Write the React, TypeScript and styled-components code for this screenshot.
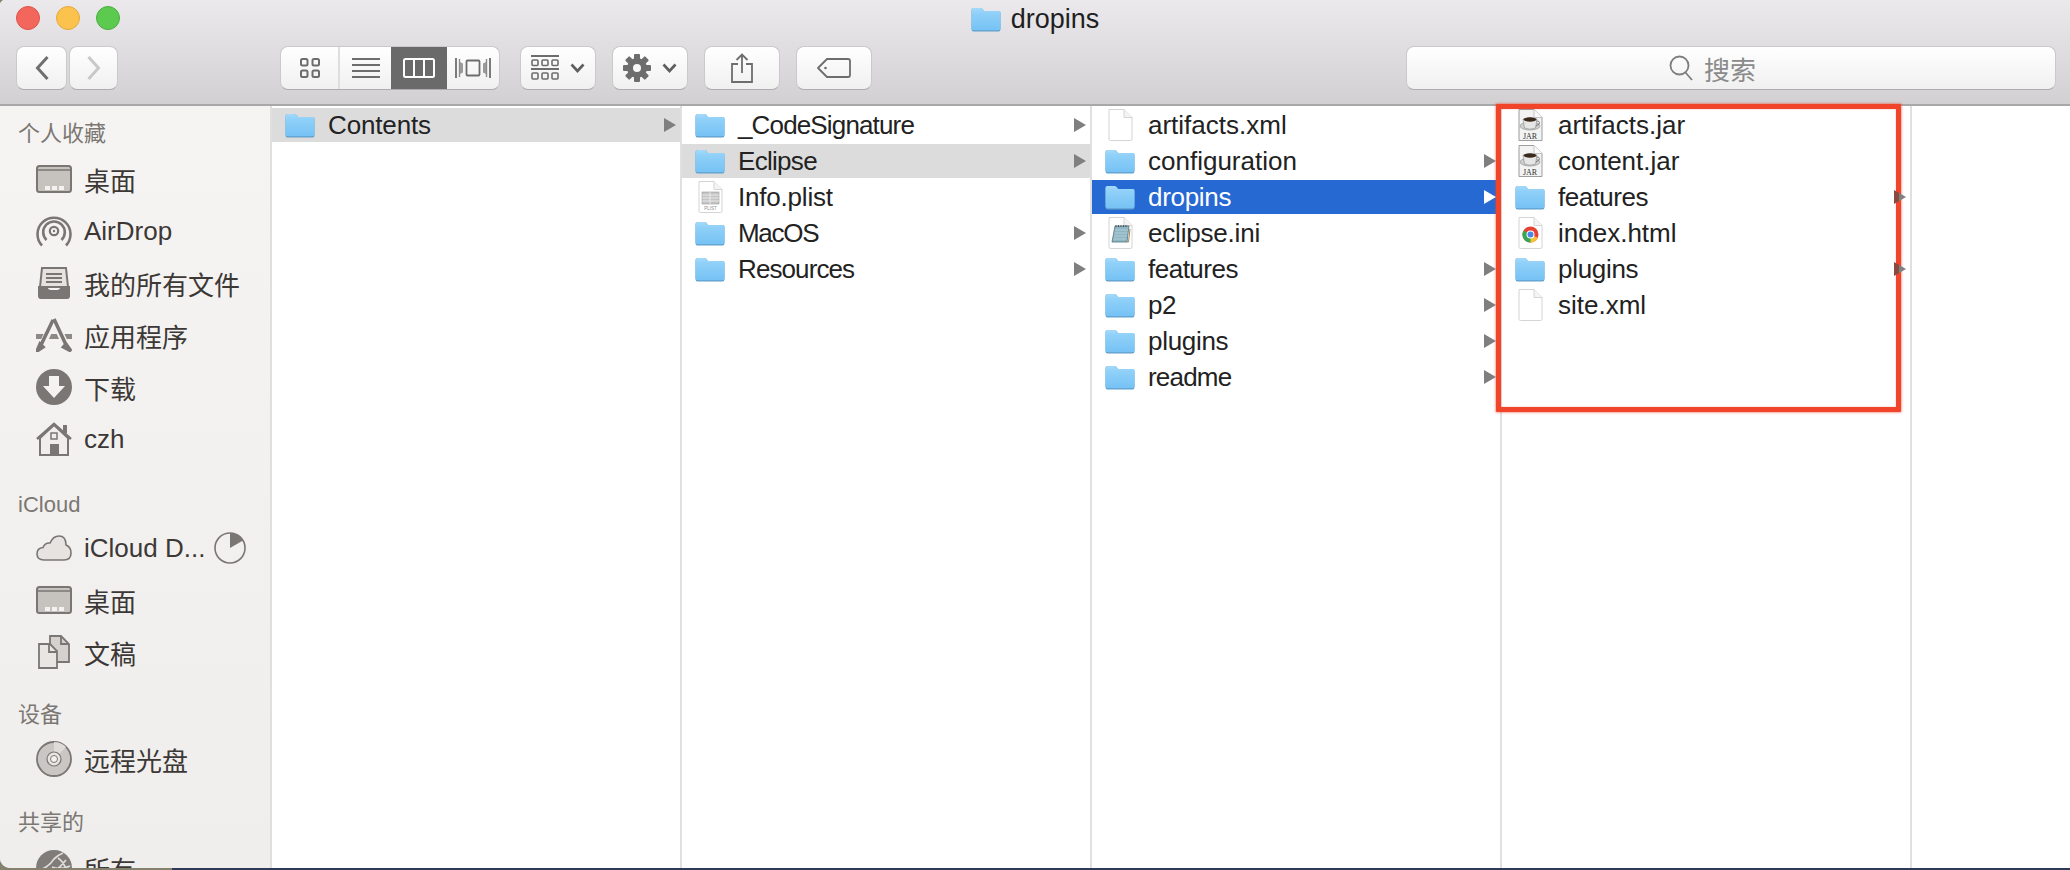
import React from "react";
import styled, { createGlobalStyle } from "styled-components";

const Global = createGlobalStyle`
  html, body { margin: 0; padding: 0; background: #2e3a56; }
  * { box-sizing: border-box; }
`;

const FONT = `"Liberation Sans", "Noto Sans CJK SC", sans-serif`;

const Desktop = styled.div`
  width: 2070px;
  height: 870px;
  overflow: hidden;
  font-family: ${FONT};
  background: linear-gradient(to right, #85816f 0, #85816f 172px, #2e3a56 172px);
`;

const Window = styled.div`
  position: relative;
  height: 868px;
  display: flex;
  flex-direction: column;
  overflow: hidden;
  background: #fff;
  border-radius: 5px 0 0 10px;
`;

const Chrome = styled.header`
  flex: none;
  height: 106px;
  display: flex;
  flex-direction: column;
  background: linear-gradient(#ebe9ec, #d2d0d2);
  border-bottom: 2px solid #a9a7a9;
`;

const TitleRow = styled.div`
  height: 46px;
  display: grid;
  grid-template-columns: 1fr auto 1fr;
`;

const Lights = styled.div`
  display: flex;
  gap: 16px;
  padding: 6px 0 0 16px;
`;

const Light = styled.span<{ $fill: string; $edge: string }>`
  width: 24px;
  height: 24px;
  border-radius: 50%;
  background: ${(p) => p.$fill};
  border: 1px solid ${(p) => p.$edge};
`;

const Title = styled.div`
  display: flex;
  align-items: center;
  gap: 10px;
  height: 38px;
  font-size: 27px;
  color: #1f1f1f;
`;

const ToolRow = styled.div`
  height: 44px;
  display: flex;
  padding: 0 14px 0 16px;
`;

const Btn = styled.div<{ $w: number; $ml?: number; $gap?: number }>`
  width: ${(p) => p.$w}px;
  margin-left: ${(p) => p.$ml ?? 0}px;
  height: 44px;
  display: flex;
  align-items: center;
  justify-content: center;
  gap: ${(p) => p.$gap ?? 0}px;
  background: linear-gradient(#ffffff, #f0f0f0);
  border: 1px solid #cbc9cb;
  border-bottom-color: #adabad;
  border-radius: 8px;
`;

const ViewGroup = styled.div`
  margin-left: 162px;
  width: 220px;
  height: 44px;
  display: flex;
  overflow: hidden;
  background: linear-gradient(#ffffff, #f0f0f0);
  border: 1px solid #cbc9cb;
  border-bottom-color: #adabad;
  border-radius: 8px;
`;

const Seg = styled.div<{ $w: number; $on?: boolean; $divider?: boolean }>`
  flex: ${(p) => (p.$w ? `0 0 ${p.$w}px` : "1")};
  display: flex;
  align-items: center;
  justify-content: center;
  background: ${(p) => (p.$on ? "#6a6a6a" : "transparent")};
  border-right: ${(p) => (p.$divider ? "2px solid #dedede" : "none")};
  margin: ${(p) => (p.$on ? "-1px 0" : "0")};
`;

const SearchBox = styled(Btn)`
  margin-left: auto;
  padding-right: 37px;
  gap: 11px;
  font-size: 26px;
  color: #8b8b8b;
`;

const Body = styled.main`
  flex: 1;
  min-height: 0;
  display: flex;
`;

const Sidebar = styled.nav`
  flex: none;
  width: 272px;
  overflow: hidden;
  background: linear-gradient(#f6f4f2, #efeeec);
  border-right: 2px solid #dfdfdf;
`;

const SectionHead = styled.div<{ $top: number; $bottom: number }>`
  padding: ${(p) => p.$top}px 0 ${(p) => p.$bottom}px 18px;
  font-size: 22px;
  line-height: 26px;
  color: #7b7773;
`;

const Item = styled.div`
  height: 52px;
  display: flex;
  align-items: center;
  padding-left: 36px;
  font-size: 26px;
  color: #3c3836;
  white-space: nowrap;
`;

const ItemIcon = styled.span`
  flex: none;
  width: 36px;
  height: 36px;
  margin-right: 12px;
  display: flex;
  align-items: center;
  justify-content: center;
`;

const Pie = styled.span`
  margin-left: 9px;
  display: flex;
`;

const Column = styled.section<{ $w?: number }>`
  flex: ${(p) => (p.$w ? `0 0 ${p.$w}px` : "1")};
  padding-top: 2px;
  display: flex;
  flex-direction: column;
  gap: 2px;
  border-right: ${(p) => (p.$w ? "2px solid #e0e0e0" : "none")};
`;

const Row = styled.div<{ $state?: "gray" | "blue" }>`
  height: 34px;
  display: flex;
  align-items: center;
  padding-right: 4px;
  font-size: 26px;
  color: ${(p) => (p.$state === "blue" ? "#fff" : "#222")};
  background: ${(p) => (p.$state === "blue" ? "#2669d3" : p.$state === "gray" ? "#dcdcdc" : "transparent")};
`;

const Label = styled.span<{ $track?: number }>`
  letter-spacing: ${(p) => p.$track ?? 0}px;
`;

const RowIcon = styled.span`
  flex: none;
  width: 56px;
  padding-left: 13px;
  display: flex;
`;

const FileSlot = styled.span`
  padding-left: 3px;
  display: flex;
`;

const RowArrow = styled.svg`
  margin-left: auto;
  position: relative;
  z-index: 2;
  flex: none;
`;

const RedBox = styled.div`
  position: absolute;
  z-index: 1;
  left: 1496px;
  top: 104px;
  width: 405px;
  height: 308px;
  border: 5px solid #f0452a;
  border-radius: 1px;
  box-shadow: 0 0 2px 1px rgba(240, 69, 42, 0.45), inset 0 0 2px rgba(240, 69, 42, 0.4);
  pointer-events: none;
`;

const Folder = () => (
  <svg width="30" height="25" viewBox="0 0 30 25">
    <defs>
      <linearGradient id="fg" x1="0" y1="0" x2="0" y2="1">
        <stop offset="0" stopColor="#a5d9fa" />
        <stop offset="0.25" stopColor="#8fd0f8" />
        <stop offset="1" stopColor="#76c2f5" />
      </linearGradient>
    </defs>
    <path d="M.5 3Q.5 1 2.500 1H9.500Q11 1 12 2.500L13 4H28Q29.500 4 29.500 6V22Q29.500 24.500 27.500 24.500H2.500Q.5 24.500.5 22Z" fill="#5f9fca" />
    <path d="M.5 3Q.5 1 2.500 1H9.500Q11 1 12 2.500L13 4H28Q29.500 4 29.500 6V21.500Q29.500 23.300 27.500 23.300H2.500Q.5 23.300.5 21.500Z" fill="url(#fg)" />
  </svg>
);

const Page = ({ children }: { children?: React.ReactNode }) => (
  <svg width="25" height="32" viewBox="0 0 25 32">
    <path d="M1 .5H16L24 8.500V30Q24 31.500 22.500 31.500H2.500Q1 31.500 1 30Z" fill="#fff" stroke="#d4d4d4" />
    <path d="M16 .5V8.500H24" fill="#f4f4f4" stroke="#d4d4d4" />
    {children}
  </svg>
);

const PlistPage = () => (
  <Page>
    <rect x="4" y="11" width="17" height="12" fill="#c4c4c4" stroke="#9c9c9c" strokeWidth=".6" />
    <path d="M4 14H21M4 17H21M4 20H21M12 11V23" stroke="#f2f2f2" strokeWidth=".8" />
    <text x="12.500" y="29" fontSize="4.500" textAnchor="middle" fill="#8a8a8a" fontFamily="Liberation Sans">PLIST</text>
  </Page>
);

const IniPage = () => (
  <Page>
    <path d="M7 9H21L19 25H4Z" fill="#8fb6c4" stroke="#54707c" strokeWidth=".8" />
    <path d="M7 13H20M6.500 16H19.500M6 19H19M5.500 22H18.500" stroke="#b8d4dc" strokeWidth=".8" />
    <path d="M8 8V10M10.500 8V10M13 8V10M15.500 8V10M18 8V10" stroke="#444" strokeWidth=".8" />
    <path d="M19 25H20.500L22 12" stroke="#a58a5a" fill="none" />
  </Page>
);

const JarPage = () => (
  <svg width="25" height="32" viewBox="0 0 25 32">
    <path d="M1 .5H16L24 8.500V31.500H1Z" fill="#f3f3f3" stroke="#9d9d9d" />
    <path d="M16 .5V8.500H24" fill="#fafafa" stroke="#c4c4c4" />
    <ellipse cx="12" cy="17" rx="10" ry="4" fill="#cfcfcf" stroke="#8a8a8a" strokeWidth=".6" />
    <path d="M5 10Q12 7.500 19 10L17.500 19Q12 21.500 6.500 19Z" fill="#e6e6e6" stroke="#8a8a8a" strokeWidth=".6" />
    <ellipse cx="12" cy="10.500" rx="6.500" ry="2.200" fill="#3a2a1c" />
    <path d="M18.500 12Q22.500 12 21 15L18 17" fill="none" stroke="#777" />
    <text x="12" y="29.800" fontSize="8" textAnchor="middle" fill="#333" fontFamily="Liberation Serif">JAR</text>
  </svg>
);

const ChromePage = () => (
  <Page>
    <g transform="translate(12.500 17.500)">
      <circle r="8" fill="#e64234" />
      <path d="M0 0L6.930 4A8 8 0 0 1-2 7.750Z" fill="#f5c33b" transform="rotate(-6)" />
      <path d="M0 0L-6.930-4A8 8 0 0 0 0 8Z" fill="#34a853" />
      <circle r="4" fill="#fff" />
      <circle r="3" fill="#4a86e8" />
    </g>
  </Page>
);

const arrowGrad = "arrowClip";
const Arrow = ({ state, clipped }: { state?: "gray" | "blue"; clipped?: boolean }) => (
  <RowArrow width="12" height="14" viewBox="0 0 12 14">
    <defs>
      <linearGradient id={arrowGrad} x1="0" y1="0" x2="1" y2="0">
        <stop offset="0.45" stopColor="#8a4a3d" />
        <stop offset="0.45" stopColor="#808080" />
      </linearGradient>
    </defs>
    <path d="M0 0L12 7L0 14Z" fill={clipped ? `url(#${arrowGrad})` : state === "blue" ? "#fff" : "#7f7f7f"} />
  </RowArrow>
);

const BackChevron = ({ c, flip }: { c: string; flip?: boolean }) => (
  <svg width="14" height="26" viewBox="0 0 14 26" style={flip ? { transform: "scaleX(-1)" } : undefined}>
    <path d="M12.500 2L2.500 13L12.500 24" fill="none" stroke={c} strokeWidth="3" />
  </svg>
);

const G = "#6d6d6d";

const IconsView = () => (
  <svg width="20" height="20" viewBox="0 0 20 20" fill="none" stroke={G} strokeWidth="2">
    <rect x="1" y="1" width="6.500" height="6.500" rx="1.500" />
    <rect x="12.500" y="1" width="6.500" height="6.500" rx="1.500" />
    <rect x="1" y="12.500" width="6.500" height="6.500" rx="1.500" />
    <rect x="12.500" y="12.500" width="6.500" height="6.500" rx="1.500" />
  </svg>
);
const ListView = () => (
  <svg width="28" height="20" viewBox="0 0 28 20" stroke={G} strokeWidth="2">
    <path d="M0 1H28M0 7H28M0 13H28M0 19H28" />
  </svg>
);
const ColumnView = () => (
  <svg width="32" height="20" viewBox="0 0 32 20" fill="none" stroke="#fff" strokeWidth="2">
    <rect x="1" y="1" width="30" height="18" rx="1.500" />
    <path d="M11 1V19M21 1V19" />
  </svg>
);
const FlowView = () => (
  <svg width="36" height="20" viewBox="0 0 36 20" fill="none" stroke={G} strokeWidth="1.800">
    <rect x="11.500" y="2.500" width="13" height="15" rx="1" />
    <path d="M1 0V20M35 0V20" />
    <path d="M4.500 1V19M31.500 1V19" stroke="#8c8c8c" strokeWidth="1.400" />
    <path d="M5 4L8 5.500V14.500L5 16ZM31 4L28 5.500V14.500L31 16Z" fill="#9a9a9a" stroke="none" />
  </svg>
);
const ArrangeIcon = () => (
  <svg width="28" height="26" viewBox="0 0 28 26" fill="none" stroke={G}>
    <path d="M0 1H28M0 14H28" strokeWidth="2" />
    {[1, 11, 21].map((x) => (
      <React.Fragment key={x}>
        <rect x={x} y="5" width="6" height="5.500" rx="1" strokeWidth="1.600" />
        <rect x={x} y="18" width="6" height="6" rx="1" strokeWidth="1.600" />
      </React.Fragment>
    ))}
  </svg>
);
const Caret = () => (
  <svg width="15" height="10" viewBox="0 0 15 10">
    <path d="M1.500 1.500L7.500 8L13.500 1.500" fill="none" stroke="#5e5e5e" strokeWidth="2.600" />
  </svg>
);
const GearIcon = () => (
  <svg width="28" height="28" viewBox="-14 -14 28 28">
    {[0, 45, 90, 135].map((a) => (
      <rect key={a} x="-3" y="-14" width="6" height="28" rx="1" fill={G} transform={`rotate(${a})`} />
    ))}
    <circle r="10" fill={G} />
    <circle r="4" fill="#f8f8f8" />
  </svg>
);
const ShareIcon = () => (
  <svg width="22" height="30" viewBox="0 0 22 30" fill="none" stroke={G} strokeWidth="1.800">
    <path d="M7 11H1V29H21V11H15" />
    <path d="M11 20V1.500M5.500 7L11 1.500L16.500 7" />
  </svg>
);
const TagIcon = () => (
  <svg width="34" height="20" viewBox="0 0 34 20" fill="none" stroke={G} strokeWidth="1.800">
    <path d="M10 1H31Q33 1 33 3V17Q33 19 31 19H10L1 10Z" strokeLinejoin="round" />
    <circle cx="8.500" cy="10" r="1.300" fill={G} stroke="none" />
  </svg>
);
const SearchIcon = () => (
  <svg width="24" height="26" viewBox="0 0 24 26" fill="none" stroke="#7d7d7d" strokeWidth="1.800">
    <circle cx="10.500" cy="10.500" r="9" />
    <path d="M16.500 17.500L23 25" />
  </svg>
);

const S = "#7a7673";
const DesktopIcon = () => (
  <svg width="36" height="28" viewBox="0 0 36 28">
    <rect x="1" y="1" width="34" height="26" rx="2.500" fill="#c6c3bf" stroke={S} strokeWidth="2" />
    <path d="M1 5H35" stroke={S} strokeWidth="1.500" />
    <rect x="9" y="21" width="5" height="4" fill="#f4f2f0" />
    <rect x="16" y="21" width="5" height="4" fill="#f4f2f0" />
    <rect x="23" y="21" width="5" height="4" fill="#f4f2f0" />
  </svg>
);
const AirDropIcon = () => (
  <svg width="36" height="34" viewBox="0 0 36 34" fill="none" stroke={S} strokeWidth="2.600">
    <path d="M6 31.500A16.500 16.500 0 1 1 30 31.500" />
    <path d="M10.500 26A10.800 10.800 0 1 1 25.500 26" />
    <circle cx="18" cy="17" r="4.200" strokeWidth="2.200" />
    <circle cx="18" cy="17" r="1.200" fill={S} stroke="none" />
  </svg>
);
const TrayIcon = () => (
  <svg width="32" height="32" viewBox="0 0 32 32">
    <path d="M4 1H28L30 20H2Z" fill="#e5e2df" stroke={S} strokeWidth="2" />
    <path d="M8 7H24M8 11H24M8 15H24" stroke={S} strokeWidth="1.800" />
    <path d="M0 19H9Q10 23 13 23H19Q22 23 23 19H32V29Q32 32 29 32H3Q0 32 0 29Z" fill={S} />
  </svg>
);
const AppsIcon = () => (
  <svg width="36" height="34" viewBox="0 0 36 34">
    <rect x="0" y="16" width="36" height="5" fill="#8d8985" />
    <path d="M18 1L6 28" stroke="#f4f2f0" strokeWidth="7" />
    <path d="M18 1L30 28" stroke="#f4f2f0" strokeWidth="7" />
    <path d="M17 2L5 27M1 33L4 26L7 29Z" stroke={S} strokeWidth="3.500" fill={S} />
    <path d="M18 1L31 29M35 33L30 26L27.500 29Z" stroke={S} strokeWidth="3.500" fill={S} />
  </svg>
);
const DownloadIcon = () => (
  <svg width="36" height="36" viewBox="0 0 36 36">
    <circle cx="18" cy="18" r="18" fill={S} />
    <path d="M13 7H23V17H29L18 29L7 17H13Z" fill="#f5f3f1" />
  </svg>
);
const HomeIcon = () => (
  <svg width="36" height="34" viewBox="0 0 36 34">
    <path d="M4 16V33H32V16L18 3Z" fill="#f0eeec" stroke={S} strokeWidth="2" />
    <path d="M1 17L18 2L35 17" fill="none" stroke={S} strokeWidth="2.500" />
    <rect x="27" y="3" width="4" height="8" fill={S} />
    <rect x="15" y="11" width="6" height="6" fill="none" stroke={S} strokeWidth="1.500" />
    <rect x="14" y="22" width="9" height="11" fill={S} />
  </svg>
);
const CloudIcon = () => (
  <svg width="36" height="26" viewBox="0 0 36 26">
    <path d="M8 25Q1 25 1 19Q1 13 7 12.500Q9 7.500 14 8Q17 1 23 1Q30 1 30 10Q35 12 35 18Q35 25 28 25Z" fill="#e6e3e0" stroke={S} strokeWidth="1.600" />
  </svg>
);
const PieIcon = () => (
  <svg width="32" height="32" viewBox="0 0 32 32">
    <circle cx="16" cy="16" r="15" fill="none" stroke={S} strokeWidth="1.600" />
    <path d="M16 16V1A15 15 0 0 1 29 8.500Z" fill={S} />
  </svg>
);
const DocsIcon = () => (
  <svg width="34" height="34" viewBox="0 0 34 34">
    <path d="M13 1H24L32 9V27H13Z" fill="#d4d1ce" stroke={S} strokeWidth="1.800" />
    <path d="M24 1V9H32" fill="none" stroke={S} strokeWidth="1.800" />
    <path d="M2 9H13L20 16V33H2Z" fill="#e8e5e2" stroke={S} strokeWidth="1.800" />
    <path d="M12 9V17H20" fill="none" stroke={S} strokeWidth="1.800" />
  </svg>
);
const DiscIcon = () => (
  <svg width="36" height="36" viewBox="0 0 36 36">
    <circle cx="18" cy="18" r="17" fill="#c9c6c3" stroke={S} strokeWidth="1.800" />
    <path d="M18 1A17 17 0 0 1 30 6L23 13Q21 11 18 11Z" fill="#dedbd8" />
    <circle cx="18" cy="18" r="7" fill="#e8e6e3" stroke={S} strokeWidth="1.200" />
    <circle cx="18" cy="18" r="3.500" fill="#f4f2f0" stroke={S} strokeWidth="1" />
  </svg>
);
const GlobeIcon = () => (
  <svg width="36" height="36" viewBox="0 0 36 36">
    <circle cx="18" cy="18" r="18" fill="#807c79" />
    <path d="M3 20Q12 18 18 9Q22 5 27 3M8 30Q18 24 30 10M16 17Q24 20 34 16M22 8Q28 12 30 20" fill="none" stroke="#dedbd8" strokeWidth="1.800" />
  </svg>
);

type Entry = { name: string; icon: React.ReactNode; dir?: boolean; state?: "gray" | "blue"; track?: number };
const dir = (name: string, track = 0, state?: "gray" | "blue"): Entry => ({ name, dir: true, state, track, icon: <Folder /> });
const file = (name: string, icon: React.ReactNode, track = 0): Entry => ({ name, track, icon: <FileSlot>{icon}</FileSlot> });

const columns: { entries: Entry[]; clipped?: boolean }[] = [
  { entries: [dir("Contents", -0.15, "gray")] },
  {
    entries: [
      dir("_CodeSignature", -0.85),
      dir("Eclipse", -0.7, "gray"),
      file("Info.plist", <PlistPage />, -0.2),
      dir("MacOS", -1.3),
      dir("Resources", -0.9),
    ],
  },
  {
    entries: [
      file("artifacts.xml", <Page />),
      dir("configuration"),
      dir("dropins", -0.3, "blue"),
      file("eclipse.ini", <IniPage />, -0.2),
      dir("features", -0.5),
      dir("p2", -0.5),
      dir("plugins", -0.3),
      dir("readme", -0.8),
    ],
  },
  {
    clipped: true,
    entries: [
      file("artifacts.jar", <JarPage />),
      file("content.jar", <JarPage />),
      dir("features", -0.5),
      file("index.html", <ChromePage />),
      dir("plugins", -0.3),
      file("site.xml", <Page />),
    ],
  },
];

const sidebar: { head: string; top: number; bottom: number; items: { label: string; icon: React.ReactNode; pie?: boolean }[] }[] = [
  {
    head: "个人收藏",
    top: 15,
    bottom: 6,
    items: [
      { label: "桌面", icon: <DesktopIcon /> },
      { label: "AirDrop", icon: <AirDropIcon /> },
      { label: "我的所有文件", icon: <TrayIcon /> },
      { label: "应用程序", icon: <AppsIcon /> },
      { label: "下载", icon: <DownloadIcon /> },
      { label: "czh", icon: <HomeIcon /> },
    ],
  },
  {
    head: "iCloud",
    top: 27,
    bottom: 4,
    items: [
      { label: "iCloud D...", icon: <CloudIcon />, pie: true },
      { label: "桌面", icon: <DesktopIcon /> },
      { label: "文稿", icon: <DocsIcon /> },
    ],
  },
  { head: "设备", top: 24, bottom: 5, items: [{ label: "远程光盘", icon: <DiscIcon /> }] },
  { head: "共享的", top: 25, bottom: 6, items: [{ label: "所有", icon: <GlobeIcon /> }] },
];

export default function App() {
  return (
    <Desktop>
      <Global />
      <Window>
        <Chrome>
          <TitleRow>
            <Lights>
              <Light $fill="#f2665c" $edge="#de5249" />
              <Light $fill="#fcc24e" $edge="#e6a93a" />
              <Light $fill="#5cc94f" $edge="#4cae41" />
            </Lights>
            <Title>
              <Folder />
              dropins
            </Title>
          </TitleRow>
          <ToolRow>
            <Btn $w={51}>
              <BackChevron c="#6f6f6f" />
            </Btn>
            <Btn $w={49} $ml={2}>
              <BackChevron c="#c8c8c8" flip />
            </Btn>
            <ViewGroup>
              <Seg $w={59} $divider>
                <IconsView />
              </Seg>
              <Seg $w={51}>
                <ListView />
              </Seg>
              <Seg $w={56} $on>
                <ColumnView />
              </Seg>
              <Seg $w={0}>
                <FlowView />
              </Seg>
            </ViewGroup>
            <Btn $w={76} $ml={20} $gap={11}>
              <ArrangeIcon />
              <Caret />
            </Btn>
            <Btn $w={76} $ml={16} $gap={11}>
              <GearIcon />
              <Caret />
            </Btn>
            <Btn $w={76} $ml={16}>
              <ShareIcon />
            </Btn>
            <Btn $w={76} $ml={16}>
              <TagIcon />
            </Btn>
            <SearchBox $w={650}>
              <SearchIcon />
              搜索
            </SearchBox>
          </ToolRow>
        </Chrome>
        <Body>
          <Sidebar>
            {sidebar.map((sec) => (
              <React.Fragment key={sec.head}>
                <SectionHead $top={sec.top} $bottom={sec.bottom}>
                  {sec.head}
                </SectionHead>
                {sec.items.map((it) => (
                  <Item key={it.label + sec.head}>
                    <ItemIcon>{it.icon}</ItemIcon>
                    {it.label}
                    {it.pie && (
                      <Pie>
                        <PieIcon />
                      </Pie>
                    )}
                  </Item>
                ))}
              </React.Fragment>
            ))}
          </Sidebar>
          {columns.map((col, i) => (
            <Column key={i} $w={410}>
              {col.entries.map((e) => (
                <Row key={e.name} $state={e.state}>
                  <RowIcon>{e.icon}</RowIcon>
                  <Label $track={e.track}>{e.name}</Label>
                  {e.dir && <Arrow state={e.state} clipped={col.clipped} />}
                </Row>
              ))}
            </Column>
          ))}
          <Column />
        </Body>
        <RedBox />
      </Window>
    </Desktop>
  );
}
